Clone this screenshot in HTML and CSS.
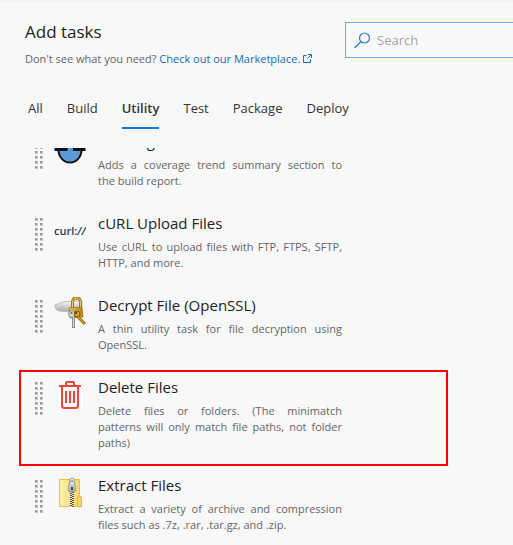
FILE: index.html
```html
<!DOCTYPE html>
<html lang="en">
<head>
<meta charset="utf-8">
<title>Add tasks</title>
<link rel="stylesheet" href="styles.css">
</head>
<body>
<svg class="defs" aria-hidden="true">
  <defs>
    <pattern id="dots" width="5" height="5" patternUnits="userSpaceOnUse">
      <rect width="3" height="3" fill="#c4c4c4"/>
      <rect width="2" height="2" fill="#9a9a9a"/>
    </pattern>
    <linearGradient id="gold" x1="0" x2="1"><stop offset="0" stop-color="#f0cf62"/><stop offset="1" stop-color="#b67d0c"/></linearGradient>
    <linearGradient id="silver" x1="0" y1="0" x2="0" y2="1"><stop offset="0" stop-color="#fafafa"/><stop offset="1" stop-color="#a2a5aa"/></linearGradient>
    <linearGradient id="folder" x1="0" x2="1"><stop offset="0" stop-color="#fff0a8"/><stop offset="1" stop-color="#f6d56c"/></linearGradient>
  </defs>
</svg>
<main class="panel">
  <header class="header">
    <div class="intro">
      <h1 class="heading">Add tasks</h1>
      <p class="hint">Don't see what you need? <a class="link" href="#marketplace">Check out our Marketplace.<svg class="external" viewBox="0 0 9 9" aria-hidden="true"><path d="M3.500 1.500h-3v7h7v-3M5 .5h3.500v3.500M8.500.5l-4 4" fill="none" stroke="currentColor"/></svg></a></p>
    </div>
    <label class="search">
      <svg class="search-icon" viewBox="0 0 17 17" aria-hidden="true"><circle cx="10.500" cy="6" r="5" fill="none" stroke="#2a78d0" stroke-width="1.200"/><path d="M7 9.500.5 16" stroke="#2a78d0" stroke-width="1.200"/></svg>
      <input class="search-input" type="search" placeholder="Search" aria-label="Search">
    </label>
  </header>
  <nav class="tabs">
    <button class="tab" type="button">All</button>
    <button class="tab" type="button">Build</button>
    <button class="tab tab-active" type="button">Utility</button>
    <button class="tab" type="button">Test</button>
    <button class="tab" type="button">Package</button>
    <button class="tab" type="button">Deploy</button>
  </nav>
  <div class="viewport">
    <ul class="tasks">
      <li class="task">
        <svg class="grip" viewBox="0 0 8 33" aria-hidden="true"><rect width="8" height="33" fill="url(#dots)"/></svg>
        <svg class="icon" viewBox="0 0 32 32" aria-hidden="true"><path d="M4.500 17h23a11.500 12.500 0 0 1-23 0z" fill="#5b9bd5" stroke="#111" stroke-width="2"/><path d="M.5 14H15l-2 4H.5zM19 14h12.500v4H19z" fill="#111"/><path d="M15 14h4v4h-6z" fill="#5b9bd5"/></svg>
        <div class="text">
          <h2 class="title">Coverage</h2>
          <p class="description">Adds a coverage trend summary section to the&nbsp;build report.</p>
        </div>
      </li>
      <li class="task">
        <svg class="grip" viewBox="0 0 8 33" aria-hidden="true"><rect width="8" height="33" fill="url(#dots)"/></svg>
        <svg class="icon" viewBox="0 0 32 32" aria-hidden="true"><text class="curl" x="0" y="20">curl:<tspan font-style="italic">//</tspan></text></svg>
        <div class="text">
          <h2 class="title">cURL Upload Files</h2>
          <p class="description">Use cURL to upload files with FTP, FTPS, SFTP, HTTP, and more.</p>
        </div>
      </li>
      <li class="task">
        <svg class="grip" viewBox="0 0 8 33" aria-hidden="true"><rect width="8" height="33" fill="url(#dots)"/></svg>
        <svg class="icon" viewBox="0 0 32 32" aria-hidden="true">
          <path d="M1 8q2-1 8-3l9-1h10v6l-10 5-13-1Q0 12 1 8z" fill="url(#silver)" stroke="#b9bbbf"/>
          <path d="M2 9l14 2" stroke="#c9cbd0"/>
          <path d="M18.500 12V6q0-5 4-5t4 5v6" fill="none" stroke="#a87714" stroke-width="3"/>
          <path d="M18.500 12V6q0-5 4-5t4 5v6" fill="none" stroke="#efce68"/>
          <path d="M15 11l13-1 1 10-13 1z" fill="url(#gold)" stroke="#9e6c0c" stroke-width=".7"/>
          <circle cx="18" cy="17" r="3.500" fill="#d7d8da" stroke="#85888c"/><circle cx="17.500" cy="16" r="1" fill="#666"/>
          <path d="M19.500 20v11" stroke="#8c8f94" stroke-width="3"/><path d="M19.500 20v10" stroke="#d4d5d8"/>
          <circle cx="23" cy="17" r="3" fill="#d5a126" stroke="#815806"/><circle cx="22" cy="16" r="1" fill="#493408"/>
          <path d="M24 20l7 7" stroke="#9c6907" stroke-width="3"/><path d="M24 20l6.500 6.500" stroke="#ebbb39"/>
        </svg>
        <div class="text">
          <h2 class="title">Decrypt File (OpenSSL)</h2>
          <p class="description">A thin utility task for file decryption using OpenSSL.</p>
        </div>
      </li>
      <li class="task task-marked">
        <svg class="grip" viewBox="0 0 8 33" aria-hidden="true"><rect width="8" height="33" fill="url(#dots)"/></svg>
        <svg class="icon" viewBox="0 0 32 32" aria-hidden="true">
          <g fill="none" stroke="#fff" stroke-width="5"><path d="M5 7h22M12 6V3h8v3M8 8v19q0 2 2 2h13q2 0 2-2V8"/></g>
          <g fill="none" stroke="#f44336" stroke-width="2"><path d="M5 7h22M12 6V4q0-1 1-1h6q1 0 1 1v2M8 8v18q0 3 2 3h12q2 0 2-3V8M12 12v12M16 12v12M20 12v12"/></g>
        </svg>
        <div class="text">
          <h2 class="title">Delete Files</h2>
          <p class="description">Delete files or folders. (The minimatch patterns&nbsp;will only match file paths, not folder paths)</p>
        </div>
      </li>
      <li class="task">
        <svg class="grip" viewBox="0 0 8 33" aria-hidden="true"><rect width="8" height="33" fill="url(#dots)"/></svg>
        <svg class="icon" viewBox="0 0 32 32" aria-hidden="true">
          <path d="M5.500 2.500h20v27h-20z" fill="url(#folder)" stroke="#e9bf3c"/>
          <path d="M23.500 29.500V21q0-2 2-2t2 2v8.500z" fill="#f9d865" stroke="#e3b430"/>
          <path d="M16 14h4v16h-4z" fill="#e8dfc0"/>
          <path d="M17 14v16M19 15v15" stroke="#555" stroke-width="2" stroke-dasharray="1 1"/>
          <path d="M15.500 4q0-3 2.500-3t2.500 3l1 9q0 2-2 2h-3q-2 0-2-2z" fill="url(#silver)" stroke="#858890" stroke-width=".8"/>
          <path d="M16.500 5q1.500-3 3 0" fill="none" stroke="#666"/><rect x="17" y="10" width="2" height="3" fill="#444"/>
        </svg>
        <div class="text">
          <h2 class="title">Extract Files</h2>
          <p class="description">Extract a variety of archive and compression files such as .7z, .rar, .tar.gz, and .zip.</p>
        </div>
      </li>
    </ul>
  </div>
</main>
</body>
</html>
```
FILE: styles.css
```css
* {
  box-sizing: border-box;
}

body {
  margin: 0;
  background: #f8f8f8;
  color: #333;
  font-family: "Open Sans", "Noto Sans", sans-serif;
}

.defs {
  position: absolute;
  width: 0;
  height: 0;
}

.panel {
  display: flex;
  flex-direction: column;
  height: 100vh;
  border-top: 2px solid #f3f3f3;
}

.header {
  display: flex;
  gap: 20px;
  padding: 20px 0 0 25px;
}

.intro {
  flex: 0 0 300px;
}

.heading {
  margin: 0;
  color: #222;
  font-size: 17px;
  font-weight: 400;
  line-height: 20px;
}

.hint {
  margin: 8px 0 0;
  color: #666;
  font-size: 11px;
  line-height: 18px;
}

.link {
  color: #106ebe;
  text-decoration: none;
}

.external {
  width: 9px;
  height: 9px;
  margin-left: 3px;
}

.search {
  display: flex;
  flex: 1;
  align-items: center;
  gap: 6px;
  min-width: 0;
  height: 36px;
  padding-left: 8px;
  border: 1px solid #69afe5;
  border-right: 0;
}

.search-icon {
  flex: none;
  width: 17px;
  height: 17px;
}

.search-input {
  flex: 1;
  min-width: 0;
  padding: 0;
  border: 0;
  outline: 0;
  background: transparent;
  color: #333;
  font: 13px/20px "Open Sans", "Noto Sans", sans-serif;
}

.search-input::placeholder {
  color: #a6a6a6;
}

.tabs {
  display: flex;
  gap: 24px;
  padding: 28px 0 0 28px;
}

.tab {
  padding: 0 0 7px;
  border: 0;
  border-bottom: 2px solid transparent;
  background: none;
  color: #333;
  font: 13px/24px "Open Sans", "Noto Sans", sans-serif;
}

.tab-active {
  border-color: #0078d4;
  font-weight: 600;
}

.viewport {
  flex: 1;
  min-height: 0;
  margin-top: 19px;
  overflow: hidden;
}

.tasks {
  margin: -24px 0 0;
  padding: 0;
  list-style: none;
}

.task {
  position: relative;
  display: flex;
  align-items: flex-start;
  padding: 7px 20px 16px 35px;
}

.task-marked::after {
  position: absolute;
  inset: 0 65px 2px 19px;
  border: 2px solid #f00;
  content: "";
}

.grip {
  flex: none;
  width: 8px;
  height: 33px;
  margin: 5px 11px 0 0;
}

.icon {
  flex: none;
  width: 32px;
  height: 32px;
  margin: 2px 12px 0 0;
}

.curl {
  fill: #17405a;
  font: 600 11px "Open Sans", sans-serif;
}

.text {
  flex: 0 1 244px;
}

.title {
  margin: 0 0 6px;
  color: #222;
  font-size: 15px;
  font-weight: 400;
  line-height: 20px;
}

.description {
  margin: 0;
  padding-bottom: 1px;
  color: #666;
  font-size: 11px;
  line-height: 16px;
  text-align: justify;
}
```
